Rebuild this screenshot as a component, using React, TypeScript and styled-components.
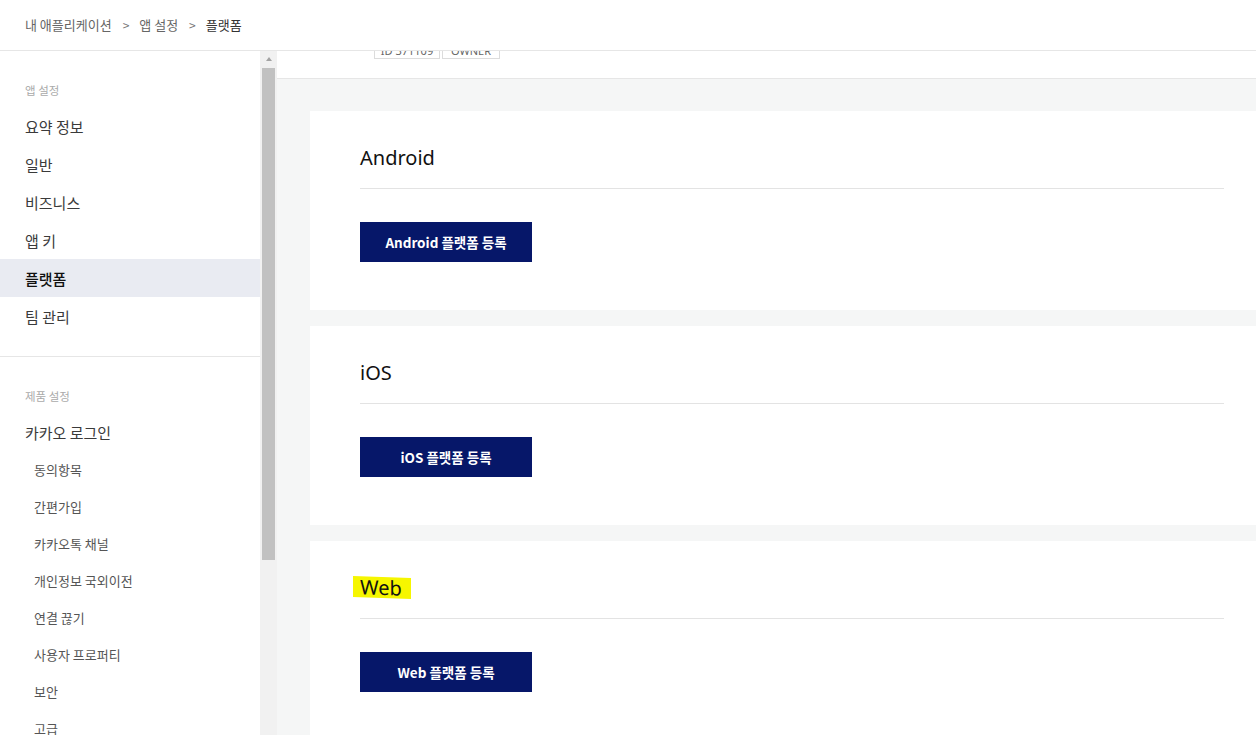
import React from 'react';
import styled, { createGlobalStyle } from 'styled-components';

const GlobalStyle = createGlobalStyle`
    html, body {
        margin: 0;
        padding: 0;
        height: 100%;
        overflow: hidden;
        background: #ffffff;
        font-family: 'Noto Sans CJK KR', 'Noto Sans', sans-serif;
        color: #222;
    }
    * {
        box-sizing: border-box;
    }
`;

const Page = styled.div`
    display: flex;
    flex-direction: column;
    height: 100vh;
`;

const Header = styled.header`
    height: 51px;
    flex-shrink: 0;
    display: flex;
    align-items: center;
    padding: 0 0 1px 25px;
    border-bottom: 1px solid #e6e6e6;
    background: #fff;
`;

const Crumb = styled.span<{ $current?: boolean }>`
    font-size: 13px;
    line-height: 20px;
    color: ${(p) => (p.$current ? '#333' : '#666')};
`;

const CrumbSep = styled.span`
    font-size: 12px;
    color: #777;
    margin: 0 10px 0 11px;
`;

const Body = styled.div`
    flex: 1;
    display: flex;
    min-height: 0;
`;

const Sidebar = styled.aside`
    width: 277px;
    flex-shrink: 0;
    height: 100%;
    display: flex;
    background: #fff;
`;

const SideNav = styled.nav`
    width: 260px;
    height: 100%;
    overflow: hidden;
`;

/* scrollbar is drawn by hand, headless browser hides the native one */
const ScrollRail = styled.div`
    width: 17px;
    height: 100%;
    background: #f1f1f1;
    display: flex;
    flex-direction: column;
    align-items: center;
`;

const ScrollArrow = styled.div`
    height: 17px;
    width: 100%;
    display: flex;
    align-items: center;
    justify-content: center;
    &::before {
        content: '';
        width: 0;
        height: 0;
        border-left: 3.5px solid transparent;
        border-right: 3.5px solid transparent;
        border-bottom: 4px solid #a3a3a3;
        margin-top: -1px;
    }
`;

const ScrollThumb = styled.div`
    width: 13px;
    height: 492px;
    background: #c1c1c1;
`;

const Group = styled.div<{ $last?: boolean }>`
    padding: 30px 0 21px;
    border-bottom: ${(p) => (p.$last ? '0' : '1px solid #e6e6e6')};
`;

const GroupLabel = styled.div`
    padding-left: 25px;
    margin-bottom: 8px;
    font-size: 11.5px;
    line-height: 18px;
    color: #aaa;
`;

const MenuItem = styled.div<{ $active?: boolean; $sub?: boolean }>`
    display: flex;
    align-items: center;
    height: ${(p) => (p.$sub ? '37px' : '38px')};
    padding-left: ${(p) => (p.$sub ? '34px' : '25px')};
    font-size: ${(p) => (p.$sub ? '13px' : '15px')};
    color: ${(p) => (p.$active ? '#111' : p.$sub ? '#555' : '#3a3a3a')};
    font-weight: ${(p) => (p.$active ? 500 : 400)};
    background: ${(p) => (p.$active ? '#e9ebf2' : 'transparent')};
`;

const Main = styled.main`
    flex: 1;
    min-width: 0;
    height: 100%;
    overflow: hidden;
    background: #f5f6f6;
`;

const InfoBand = styled.div`
    height: 28px;
    overflow: hidden;
    background: #fff;
    border-bottom: 1px solid #e6e6e6;
    padding-left: 97px;
`;

const Badges = styled.div`
    display: flex;
    gap: 2px;
    margin-top: -14px;
`;

const Badge = styled.span<{ $w: number }>`
    width: ${(p) => p.$w}px;
    height: 22px;
    border: 1px solid #dcdcdc;
    text-align: center;
    font-size: 11px;
    line-height: 26px;
    color: #666;
    font-family: 'Noto Sans', sans-serif;
    overflow: hidden;
`;

const Cards = styled.div`
    display: flex;
    flex-direction: column;
    gap: 16px;
    padding: 32px 0 0 33px;
`;

const Card = styled.section`
    background: #fff;
    padding: 32px 32px 48px 50px;
`;

const CardTitle = styled.h3`
    margin: 0;
    padding-bottom: 15px;
    border-bottom: 1px solid #e3e3e3;
    font-family: 'Noto Sans', 'Noto Sans CJK KR', sans-serif;
    font-size: 20px;
    line-height: 30px;
    font-weight: 400;
    color: #111;
`;

const Highlight = styled.mark`
    background: #f6f600;
    color: inherit;
    padding: 0 9px 0 7px;
    margin-left: -7px;
    display: inline-block;
    line-height: 21px;
    transform: skewY(2deg);
`;

const RegisterButton = styled.button`
    margin-top: 33px;
    width: 172px;
    height: 40px;
    border: 0;
    background: #061769;
    color: #fff;
    font-family: 'Noto Sans CJK KR', sans-serif;
    font-size: 13.5px;
    font-weight: 700;
    cursor: pointer;
`;

const topMenu = ['요약 정보', '일반', '비즈니스', '앱 키', '플랫폼', '팀 관리'];
const loginSub = ['동의항목', '간편가입', '카카오톡 채널', '개인정보 국외이전', '연결 끊기', '사용자 프로퍼티', '보안', '고급'];
const platforms = ['Android', 'iOS', 'Web'];

export default function App() {
    return (
        <Page>
            <GlobalStyle />
            <Header>
                <Crumb>내 애플리케이션</Crumb>
                <CrumbSep>&gt;</CrumbSep>
                <Crumb>앱 설정</Crumb>
                <CrumbSep>&gt;</CrumbSep>
                <Crumb $current>플랫폼</Crumb>
            </Header>
            <Body>
                <Sidebar>
                    <SideNav>
                        <Group>
                            <GroupLabel>앱 설정</GroupLabel>
                            {topMenu.map((m) => (
                                <MenuItem key={m} $active={m === '플랫폼'}>
                                    {m}
                                </MenuItem>
                            ))}
                        </Group>
                        <Group $last>
                            <GroupLabel>제품 설정</GroupLabel>
                            <MenuItem>카카오 로그인</MenuItem>
                            {loginSub.map((m) => (
                                <MenuItem key={m} $sub>
                                    {m}
                                </MenuItem>
                            ))}
                        </Group>
                    </SideNav>
                    <ScrollRail>
                        <ScrollArrow />
                        <ScrollThumb />
                    </ScrollRail>
                </Sidebar>
                <Main>
                    <InfoBand>
                        <Badges>
                            <Badge $w={66}>ID 371109</Badge>
                            <Badge $w={58}>OWNER</Badge>
                        </Badges>
                    </InfoBand>
                    <Cards>
                        {platforms.map((p) => (
                            <Card key={p}>
                                <CardTitle>{p === 'Web' ? <Highlight>{p}</Highlight> : p}</CardTitle>
                                <RegisterButton>{p} 플랫폼 등록</RegisterButton>
                            </Card>
                        ))}
                    </Cards>
                </Main>
            </Body>
        </Page>
    );
}
